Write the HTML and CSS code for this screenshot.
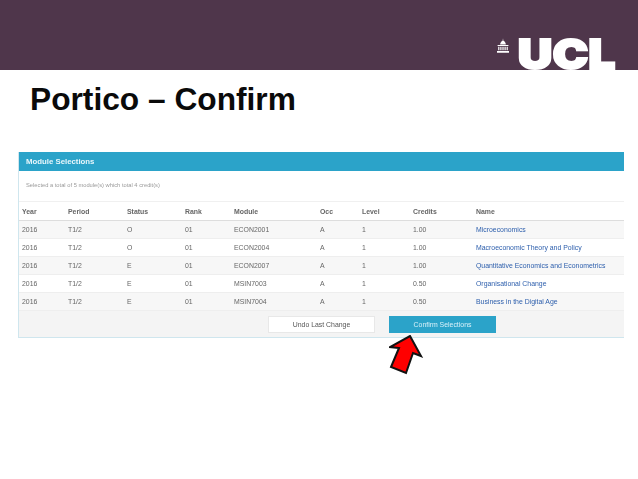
FILE: index.html
```html
<!DOCTYPE html>
<html lang="en">
<head>
<meta charset="utf-8">
<title>Portico – Confirm</title>
<link rel="stylesheet" href="styles.css">
</head>
<body>
<header class="banner">
  <div class="logo">
    <svg class="crest" viewBox="0 0 20 24" width="12" height="15" aria-hidden="true">
      <path fill="#fff" d="M10 0l.6 4C13 5 14.500 7.500 14.800 10.500H5.200C5.500 7.500 7 5 9.400 4z"/>
      <path fill="#fff" d="M1 11h18v2H1zM2 14h2v6H2zM5.500 14h2v6h-2zM9 14h2v6H9zM12.500 14h2v6h-2zM16 14h2v6h-2zM0 21h20v3H0z"/>
    </svg>
    <span class="wordmark">UCL</span>
  </div>
</header>
<h1 class="title">Portico – Confirm</h1>
<section class="panel">
  <h2 class="panel-head">Module Selections</h2>
  <p class="summary">Selected a total of 5 module(s) which total 4 credit(s)</p>
  <table class="modules">
    <colgroup>
      <col class="c-year"><col class="c-period"><col class="c-status"><col class="c-rank"><col class="c-module"><col class="c-occ"><col class="c-level"><col class="c-credits"><col>
    </colgroup>
    <thead>
      <tr><th>Year</th><th>Period</th><th>Status</th><th>Rank</th><th>Module</th><th>Occ</th><th>Level</th><th>Credits</th><th>Name</th></tr>
    </thead>
    <tbody>
      <tr><td>2016</td><td>T1/2</td><td>O</td><td>01</td><td>ECON2001</td><td>A</td><td>1</td><td>1.00</td><td><a href="#">Microeconomics</a></td></tr>
      <tr><td>2016</td><td>T1/2</td><td>O</td><td>01</td><td>ECON2004</td><td>A</td><td>1</td><td>1.00</td><td><a href="#">Macroeconomic Theory and Policy</a></td></tr>
      <tr><td>2016</td><td>T1/2</td><td>E</td><td>01</td><td>ECON2007</td><td>A</td><td>1</td><td>1.00</td><td><a href="#">Quantitative Economics and Econometrics</a></td></tr>
      <tr><td>2016</td><td>T1/2</td><td>E</td><td>01</td><td>MSIN7003</td><td>A</td><td>1</td><td>0.50</td><td><a href="#">Organisational Change</a></td></tr>
      <tr><td>2016</td><td>T1/2</td><td>E</td><td>01</td><td>MSIN7004</td><td>A</td><td>1</td><td>0.50</td><td><a href="#">Business in the Digital Age</a></td></tr>
    </tbody>
  </table>
  <div class="actions">
    <button class="btn btn-undo" type="button">Undo Last Change</button>
    <button class="btn btn-confirm" type="button">Confirm Selections</button>
  </div>
</section>
<svg class="arrow" viewBox="0 0 40 46" width="40" height="46" aria-hidden="true">
  <polygon points="21,1 32,21 24,18 17,38 2,32 10,13 1,12" fill="#f00" stroke="#111" stroke-width="2" stroke-linejoin="miter"/>
</svg>
</body>
</html>
```
FILE: styles.css
```css
html, body {
  margin: 0;
  padding: 0;
  height: 479px;
  overflow: hidden;
  background: #fff;
  font-family: "Liberation Sans", Arial, sans-serif;
}
body {
  position: relative;
}
.banner {
  height: 70px;
  background: #4f364b;
  display: flex;
  justify-content: flex-end;
  align-items: flex-end;
}
.logo {
  display: flex;
  align-items: flex-start;
  gap: 23px;
  margin-right: 23px;
}
.crest {
  margin-top: 0;
}
.wordmark {
  display: block;
  font-family: Inter, "Liberation Sans", sans-serif;
  font-weight: 900;
  font-size: 41px;
  line-height: 32px;
  color: #fff;
  -webkit-text-stroke: 2px #fff;
  transform: scaleX(1.17);
  transform-origin: right center;
}
.title {
  margin: 11px 0 0 30px;
  font-size: 31.700px;
  line-height: 37px;
  font-weight: 700;
  color: #0a0a0a;
}
.panel {
  margin: 34px 14px 0 18px;
  border: 1px solid #cfe6ee;
  border-right: 0;
  border-top: 0;
  filter: blur(0.5px);
}
.panel-head {
  margin: 0;
  height: 19px;
  padding-left: 7px;
  background: #2ba3c9;
  color: #e8f6fb;
  font-size: 7.800px;
  line-height: 19px;
  font-weight: 700;
}
.summary {
  margin: 0;
  height: 30px;
  padding-left: 7px;
  font-size: 5.750px;
  line-height: 28px;
  color: #9a9a9a;
}
.modules {
  width: 100%;
  table-layout: fixed;
  border-collapse: collapse;
  font-size: 6.900px;
  color: #666;
}
.c-year { width: 46px; }
.c-period { width: 59px; }
.c-status { width: 58px; }
.c-rank { width: 49px; }
.c-module { width: 86px; }
.c-occ { width: 42px; }
.c-level { width: 51px; }
.c-credits { width: 63px; }
.modules th, .modules td {
  padding: 0 0 0 3px;
  height: 17px;
  text-align: left;
  white-space: nowrap;
}
.modules th {
  height: 18px;
  font-weight: 700;
  color: #666;
  border-top: 1px solid #f0f0f0;
  border-bottom: 1px solid #ddd;
}
.modules td {
  border-bottom: 1px solid #eee;
}
.modules tbody tr:nth-child(odd) {
  background: #f7f7f7;
}
.modules a {
  color: #2f60ad;
  text-decoration: none;
}
.actions {
  height: 26px;
  padding-top: 5px;
  box-sizing: border-box;
  background: #f4f4f4;
  display: flex;
  gap: 14px;
  padding-left: 249px;
}
.btn {
  width: 107px;
  height: 17px;
  margin: 0;
  padding: 0;
  font-family: inherit;
  font-size: 6.900px;
  border-radius: 0;
}
.btn-undo {
  background: #fff;
  border: 1px solid #e8e8e8;
  color: #555;
}
.btn-confirm {
  background: #2ba3c9;
  border: 1px solid #2ba3c9;
  color: #d9f1f9;
}
.arrow {
  position: absolute;
  left: 389px;
  top: 335px;
}
```
